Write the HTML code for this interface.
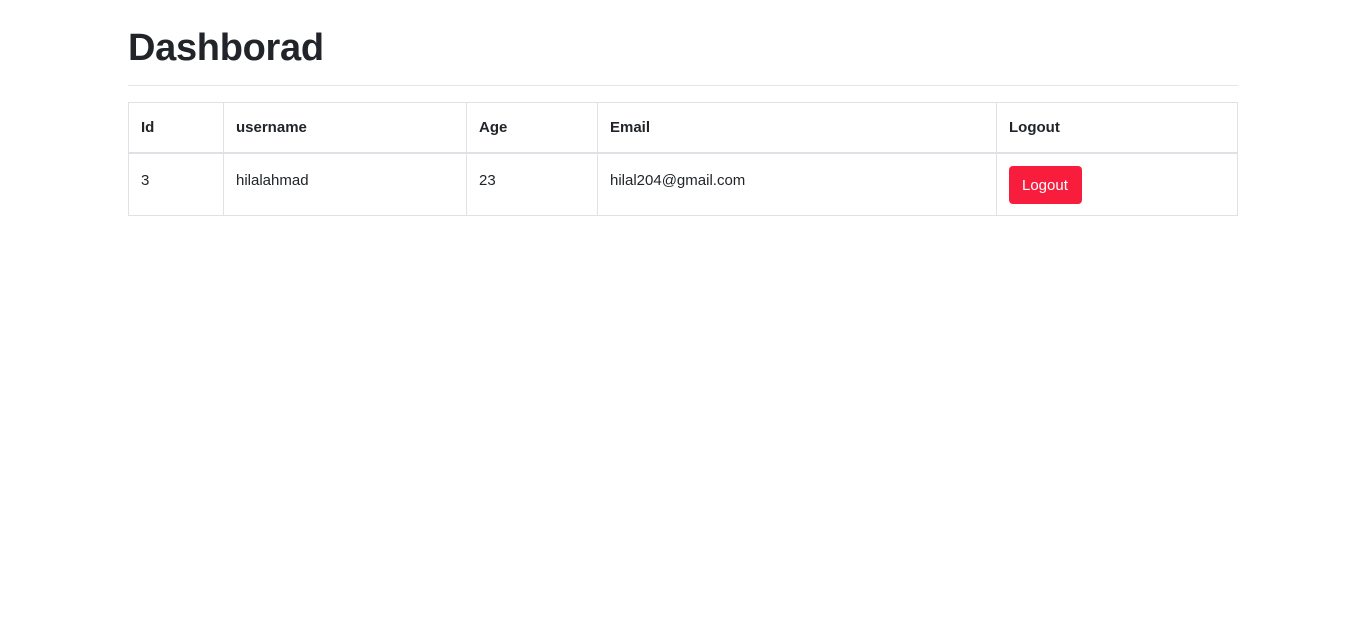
<!DOCTYPE html>
<html><head><style>
body{margin:0;background:#fff;font-family:"Liberation Sans",sans-serif;color:#212529;}
h1{position:absolute;left:128px;top:26px;margin:0;font-size:38px;font-weight:600;line-height:44px;letter-spacing:-0.3px}
.hr{position:absolute;left:128px;top:85px;width:1110px;height:1px;background:#e3e5e8}
table{position:absolute;left:128px;top:102px;width:1110px;border-collapse:collapse;font-size:15px}
td,th{border:1px solid #dee2e6;padding:0 12px;text-align:left;vertical-align:top;box-sizing:border-box}
th{height:50px;padding-top:16px;font-weight:bold;border-bottom:2px solid #dee2e6}
td{height:63px;padding-top:18px}
.btn{display:inline-block;background:#f81c3d;color:#fff;border-radius:4px;padding:0 14px 0 13px;height:38px;line-height:39px;font-size:15px}
</style></head><body>
<h1>Dashborad</h1>
<div class="hr"></div>
<table>
<tr><th style="width:95px">Id</th><th style="width:243px">username</th><th style="width:131px">Age</th><th style="width:399px">Email</th><th>Logout</th></tr>
<tr><td>3</td><td>hilalahmad</td><td>23</td><td>hilal204@gmail.com</td><td style="padding-top:12px"><span class="btn">Logout</span></td></tr>
</table>
</body></html>
